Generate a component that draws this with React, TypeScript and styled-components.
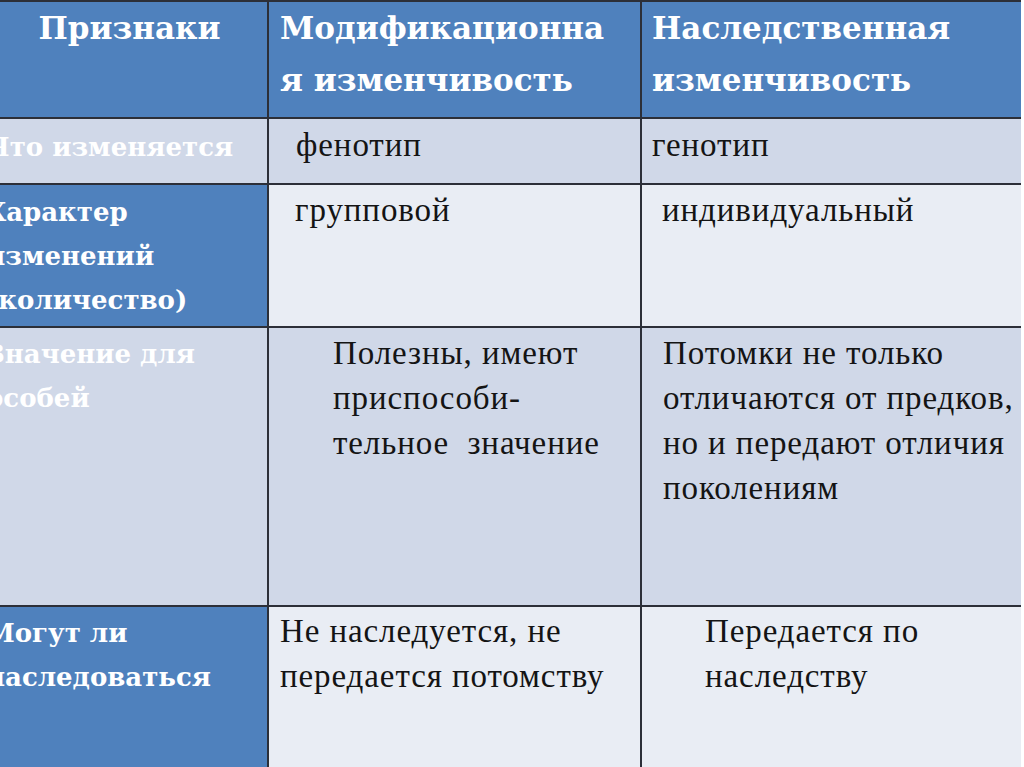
import styled, { createGlobalStyle } from "styled-components";

const GlobalStyle = createGlobalStyle`
  html, body {
    margin: 0;
    padding: 0;
    overflow: hidden;
    background: #ffffff;
  }
`;

type Band = "blue" | "odd" | "even";

const bandColor: Record<Band, string> = {
  blue: "#4f81bd",
  odd: "#d0d8e8",
  even: "#e9edf4",
};

// the table runs a little past the left edge, as in the slide photo
const Sheet = styled.div`
  display: grid;
  grid-template-columns: 285px 371px 379px;
  grid-template-rows: 115px 64px 141px 277px 160px;
  gap: 2px;
  padding-top: 2px;
  margin-left: -18px;
  width: fit-content;
  background: #2c2f38;
`;

const HeadCell = styled.div<{ $pl: number; $center?: boolean }>`
  background: ${bandColor.blue};
  color: #ffffff;
  font-family: "DejaVu Serif", "Liberation Serif", serif;
  font-weight: bold;
  font-size: 31px;
  line-height: 52px;
  padding: 0 0 0 ${(p) => p.$pl}px;
  text-align: ${(p) => (p.$center ? "center" : "left")};
  white-space: nowrap;
`;

const SideCell = styled.div<{ $band: Band; $pt: number }>`
  background: ${(p) => bandColor[p.$band]};
  color: #ffffff;
  font-family: "DejaVu Serif", "Liberation Serif", serif;
  font-weight: bold;
  font-size: 26px;
  line-height: 44px;
  padding: ${(p) => p.$pt}px 0 0 4px;
  white-space: nowrap;
`;

const Cell = styled.div<{ $band: Band; $pl: number; $pt: number }>`
  background: ${(p) => bandColor[p.$band]};
  color: #141414;
  font-family: "Liberation Serif", "Times New Roman", serif;
  font-size: 33px;
  letter-spacing: 0.9px;
  line-height: 45px;
  padding: ${(p) => p.$pt}px 0 0 ${(p) => p.$pl}px;
  white-space: pre;
`;

type Row = {
  band: Band;
  side: Band;
  sidePt: number;
  pt: number;
  label: string[];
  mod: { pl: number; lines: string[] };
  her: { pl: number; lines: string[] };
};

const rows: Row[] = [
  {
    band: "odd",
    side: "odd",
    sidePt: 6,
    pt: 4,
    label: ["Что изменяется"],
    mod: { pl: 27, lines: ["фенотип"] },
    her: { pl: 10, lines: ["генотип"] },
  },
  {
    band: "even",
    side: "blue",
    sidePt: 5,
    pt: 3,
    label: ["Характер", "изменений", "(количество)"],
    mod: { pl: 26, lines: ["групповой"] },
    her: { pl: 20, lines: ["индивидуальный"] },
  },
  {
    band: "odd",
    side: "odd",
    sidePt: 4,
    pt: 3,
    label: ["Значение для", "особей"],
    mod: { pl: 64, lines: ["Полезны, имеют", "приспособи-", "тельное  значение"] },
    her: {
      pl: 21,
      lines: ["Потомки не только", "отличаются от предков,", "но и передают отличия", "поколениям"],
    },
  },
  {
    band: "even",
    side: "blue",
    sidePt: 4,
    pt: 2,
    label: ["Могут ли", "наследоваться"],
    mod: { pl: 11, lines: ["Не наследуется, не", "передается потомству"] },
    her: { pl: 63, lines: ["Передается по", "наследству"] },
  },
];

function Lines({ items }: { items: string[] }) {
  return (
    <>
      {items.map((line, i) => (
        <div key={i}>{line}</div>
      ))}
    </>
  );
}

export default function App() {
  return (
    <>
      <GlobalStyle />
      <Sheet>
        <HeadCell $pl={10} $center>
          Признаки
        </HeadCell>
        <HeadCell $pl={11}>
          <Lines items={["Модификационна", "я изменчивость"]} />
        </HeadCell>
        <HeadCell $pl={10}>
          <Lines items={["Наследственная", "изменчивость"]} />
        </HeadCell>

        {rows.map((row, i) => (
          <>
            <SideCell key={`s${i}`} $band={row.side} $pt={row.sidePt}>
              <Lines items={row.label} />
            </SideCell>
            <Cell key={`m${i}`} $band={row.band} $pl={row.mod.pl} $pt={row.pt}>
              <Lines items={row.mod.lines} />
            </Cell>
            <Cell key={`h${i}`} $band={row.band} $pl={row.her.pl} $pt={row.pt}>
              <Lines items={row.her.lines} />
            </Cell>
          </>
        ))}
      </Sheet>
    </>
  );
}
